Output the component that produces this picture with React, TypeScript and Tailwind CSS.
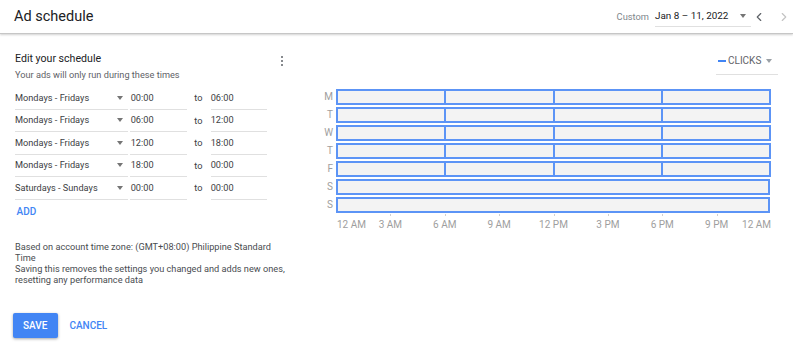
import React from "react";
import { ChevronLeft, ChevronRight } from "lucide-react";

const Tri = ({ c = "border-t-[#757575]" }: { c?: string }) => (
  <span
    className={`inline-block w-0 h-0 border-l-[3.5px] border-r-[3.5px] border-t-[4px] border-l-transparent border-r-transparent ${c}`}
  />
);

const rows = [
  { day: "Mondays - Fridays", from: "00:00", to: "06:00" },
  { day: "Mondays - Fridays", from: "06:00", to: "12:00" },
  { day: "Mondays - Fridays", from: "12:00", to: "18:00" },
  { day: "Mondays - Fridays", from: "18:00", to: "00:00" },
  { day: "Saturdays - Sundays", from: "00:00", to: "00:00" },
];

const days = [
  { d: "M", split: true },
  { d: "T", split: true },
  { d: "W", split: true },
  { d: "T", split: true },
  { d: "F", split: true },
  { d: "S", split: false },
  { d: "S", split: false },
];

const axis = ["12 AM", "3 AM", "6 AM", "9 AM", "12 PM", "3 PM", "6 PM", "9 PM", "12 AM"];

export default function App() {
  return (
    <div className="w-[793px] h-[349px] overflow-hidden bg-white font-['Roboto',sans-serif] text-[#3c4043]">
      {/* Header */}
      <div className="h-[34px] flex items-center border-b border-[#c6c6c6] shadow-[0_1px_2px_rgba(0,0,0,0.18)] pl-[14px] pr-[2px] relative">
        <div className="text-[14.5px] leading-[18px] text-[#202124] pt-[1px]">Ad schedule</div>
        <div className="ml-auto flex items-center">
          <span className="text-[9.3px] text-[#80868b] mr-[6px]">Custom</span>
          <div className="w-[96px] h-[20px] flex items-center justify-between border-b border-[#e0e0e0] pr-[5.5px]">
            <span className="text-[9.9px] text-[#202124]">Jan 8 – 11, 2022</span>
            <Tri />
          </div>
          <ChevronLeft size={14} strokeWidth={2} className="text-[#5f6368] ml-[1px]" />
          <ChevronRight size={14} strokeWidth={2} className="text-[#c4c4c4] ml-[11px]" />
        </div>
      </div>

      <div className="flex">
        {/* Left column */}
        <div className="w-[273px] ml-[15px] pt-[18px] flex flex-col">
          <div className="flex items-center justify-between h-[14px]">
            <span className="text-[10.6px] leading-[14px] text-[#202124]">Edit your schedule</span>
            <div className="w-[10px] mr-[1px] mt-[4px] flex flex-col items-center gap-[2px]">
              <span className="w-[2.2px] h-[2.2px] rounded-full bg-[#5f6368]" />
              <span className="w-[2.2px] h-[2.2px] rounded-full bg-[#5f6368]" />
              <span className="w-[2.2px] h-[2.2px] rounded-full bg-[#5f6368]" />
            </div>
          </div>
          <div className="mt-[3px] text-[9.2px] leading-[12px] text-[#5f6368]">
            Your ads will only run during these times
          </div>

          <div className="mt-[6px] flex flex-col">
            {rows.map((r, i) => (
              <div key={i} className="h-[22.5px] flex text-[9.2px]">
                <div className="w-[113px] flex items-center justify-between border-b border-[#e0e0e0] pr-[5.5px]">
                  <span>{r.day}</span>
                  <Tri />
                </div>
                <div className="w-[57px] ml-[2px] flex items-center border-b border-[#e0e0e0] pl-[0.7px]">
                  {r.from}
                </div>
                <div className="w-[23.7px] flex items-center pl-[7.3px]">to</div>
                <div className="w-[56.6px] flex items-center border-b border-[#e0e0e0]">{r.to}</div>
              </div>
            ))}
          </div>

          <div className="mt-[6.3px] ml-[1.5px] text-[10px] leading-[12px] font-medium text-[#4285f4]">ADD</div>

          <div className="mt-[23.5px] text-[9.2px] leading-[11px] text-[#4a4d51]">
            <p>Based on account time zone: (GMT+08:00) Philippine Standard Time</p>
            <p>Saving this removes the settings you changed and adds new ones, resetting any performance data</p>
          </div>

          <div className="mt-[27.5px] -ml-[2.3px] flex items-center">
            <button className="w-[45px] h-[25px] rounded-[2px] bg-[#4285f4] text-white text-[10px] font-medium shadow-[0_1px_3px_rgba(0,0,0,0.35)]">
              SAVE
            </button>
            <span className="ml-[11.7px] text-[10px] font-medium text-[#4285f4]">CANCEL</span>
          </div>
        </div>

        {/* Right column */}
        <div className="flex-1 flex flex-col items-end pr-[15px]">
          <div className="mt-[19px] w-[62px] h-[22px] border-b border-[#e0e0e0] flex items-start pt-[1.5px]">
            <span className="ml-[2.3px] mt-[5px] w-[7.4px] h-[2px] bg-[#4285f4]" />
            <span className="ml-[2.3px] text-[10px] leading-[12px] text-[#5f6368]">CLICKS</span>
            <span className="ml-[4.5px] mt-[4px] flex">
              <Tri c="border-t-[#9aa0a6]" />
            </span>
          </div>

          <div className="mt-[14.3px] mr-[7px] flex flex-col">
            <div className="flex flex-col gap-[2px]">
              {days.map((d, i) => (
                <div key={i} className="flex items-center h-[16px]">
                  <span className="w-[14px] pr-[3px] text-right text-[10px] leading-[12px] text-[#9e9e9e]">{d.d}</span>
                  {d.split ? (
                    <div className="w-[435px] h-[16px] flex border-2 border-[#5c94f6] bg-[#f3f3f3] divide-x-2 divide-[#5c94f6]">
                      <div className="flex-1" />
                      <div className="flex-1" />
                      <div className="flex-1" />
                      <div className="flex-1" />
                    </div>
                  ) : (
                    <div className="w-[434px] mr-[1px] h-[16px] border-2 border-[#5c94f6] bg-[#f3f3f3]" />
                  )}
                </div>
              ))}
            </div>
            <div className="ml-[14px] w-[435px] h-[18px] relative">
              {axis.map((a, i) => {
                const left = (i * 435) / 8;
                const tx = i === 0 ? "0%" : i === 8 ? "-100%" : "-50%";
                return (
                  <React.Fragment key={i}>
                    {i > 0 && i < 8 && (
                      <span
                        className="absolute top-[0.5px] w-[1px] h-[2px] bg-[#d0d0d0]"
                        style={{ left: `${left}px` }}
                      />
                    )}
                    <span
                      className="absolute top-[5.5px] text-[10px] leading-[12px] text-[#9e9e9e] whitespace-nowrap"
                      style={{ left: `${left + (i === 0 ? 1 : 0)}px`, transform: `translateX(${tx})` }}
                    >
                      {a}
                    </span>
                  </React.Fragment>
                );
              })}
            </div>
          </div>
        </div>
      </div>
    </div>
  );
}
